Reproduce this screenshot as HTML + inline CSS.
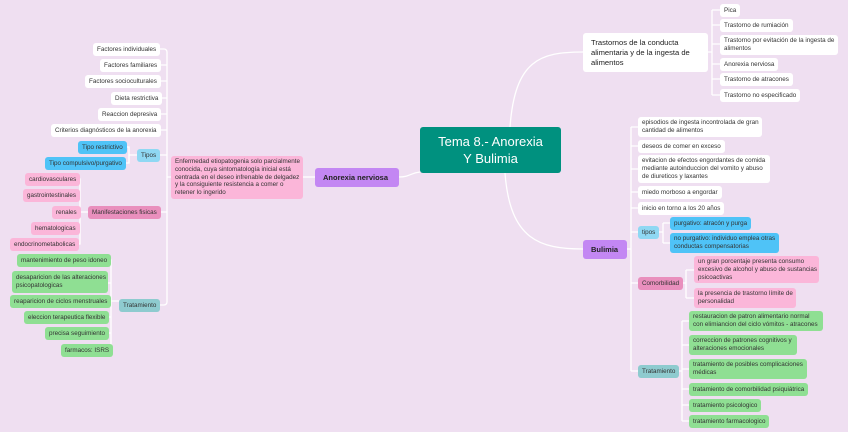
<!DOCTYPE html>
<html><head><meta charset="utf-8"><style>
*{margin:0;padding:0;box-sizing:border-box}
body{width:848px;height:434px;background:#efdff1;position:relative;overflow:hidden;font-family:"Liberation Sans",sans-serif;color:#333}
.n{position:absolute;background:#fff;border-radius:3px;font-size:6.3px;line-height:8px;padding:3px 4px;white-space:nowrap;display:flex;align-items:center;overflow:hidden}
.b{background:#4fc3f7}.lb{background:#8fd8f3}.p{background:#fbb6d9}.dp{background:#e98fbd}.g{background:#8fdf93}.t{background:#8ecbcf}
.pu{background:#c387f3;font-weight:bold;font-size:7.5px;color:#222}
svg{position:absolute;left:0;top:0}
</style></head><body>
<svg width="848" height="434" fill="none" stroke="#fff" stroke-width="1.3">
<path d="M399 177 C410 177 410 173 420 172"/>
<path d="M510 127 C515 60 540 52 583 52"/>
<path d="M505 173 C510 240 540 249 583 249"/>
<path d="M315 177 L303 177"/>
<path d="M160 49 h4 a3 3 0 0 1 3 3 V302 a3 3 0 0 1 -3 3 h-4 M160 65 h7 M160 81 h7 M160 98 h7 M160 114 h7 M160 130 h7 M160 155 h7 M160 212 h7 M167 177 h4"/>
<path d="M126 147 h3 V163 h-3 M129 155 h8"/>
<path d="M77 179 h3 V244 h-3 M77 195 h3 M77 212 h11 M77 228 h3"/>
<path d="M108 260 h3 V350 h-3 M108 283 h3 M108 301 h11 M108 317 h3 M108 333 h3"/>
<path d="M708 52 h4 M712 10 V95 M712 10 h8 M712 25 h8 M712 44 h8 M712 64 h8 M712 79 h8 M712 95 h8"/>
<path d="M627 249 h4 M631 127 V371 M631 127 h7 M631 146 h7 M631 169 h7 M631 192 h7 M631 208 h7 M631 232 h7 M631 283 h7 M631 371 h7"/>
<path d="M659 232 h4 M663 223 V243 M663 223 h7 M663 243 h7"/>
<path d="M682 283 h4 M686 270 V298 M686 270 h8 M686 298 h8"/>
<path d="M678 371 h4 M682 321 V421 M682 321 h7 M682 345 h7 M682 369 h7 M682 389 h7 M682 405 h7 M682 421 h7"/>
</svg>
<div style="position:absolute;left:0;top:432px;width:848px;height:2px;background:#fff"></div>

<div class="n" style="left:93px;top:43px;height:13px">Factores individuales</div>
<div class="n" style="left:100px;top:59px;height:13px">Factores familiares</div>
<div class="n" style="left:85px;top:75px;height:13px">Factores socioculturales</div>
<div class="n" style="left:111px;top:92px;height:13px">Dieta restrictiva</div>
<div class="n" style="left:98px;top:108px;height:13px">Reaccion depresiva</div>
<div class="n" style="left:51px;top:124px;height:13px">Criterios diagnósticos de la anorexia</div>
<div class="n b" style="left:78px;top:141px;height:13px">Tipo restrictivo</div>
<div class="n b" style="left:45px;top:157px;height:13px">Tipo compulsivo/purgativo</div>
<div class="n lb" style="left:137px;top:149px;height:13px">Tipos</div>
<div class="n p" style="left:25px;top:173px;height:13px">cardiovasculares</div>
<div class="n p" style="left:23px;top:189px;height:13px">gastrointestinales</div>
<div class="n p" style="left:52px;top:206px;height:13px">renales</div>
<div class="n p" style="left:31px;top:222px;height:13px">hematologicas</div>
<div class="n p" style="left:10px;top:238px;height:13px">endocrinometabolicas</div>
<div class="n dp" style="left:88px;top:206px;height:13px">Manifestaciones fisicas</div>
<div class="n g" style="left:17px;top:254px;height:13px">mantenimiento de peso idoneo</div>
<div class="n g" style="left:12px;top:271px;width:96px;height:22px">desaparicion de las alteraciones<br>psicopatologicas</div>
<div class="n g" style="left:10px;top:295px;height:13px">reaparicion de ciclos menstruales</div>
<div class="n g" style="left:24px;top:311px;height:13px">eleccion terapeutica flexible</div>
<div class="n g" style="left:45px;top:327px;height:13px">precisa seguimiento</div>
<div class="n g" style="left:61px;top:344px;height:13px">farmacos: ISRS</div>
<div class="n t" style="left:119px;top:299px;height:13px">Tratamiento</div>
<div class="n p" style="left:171px;top:156px;width:132px;height:43px;line-height:7.7px">Enfermedad etiopatogenia solo parcialmente<br>conocida, cuya sintomatología inicial está<br>centrada en el deseo infrenable de delgadez<br>y la consiguiente resistencia a comer o<br>retener lo ingerido</div>
<div class="n pu" style="left:315px;top:168px;width:84px;height:19px;padding-left:8px">Anorexia nerviosa</div>
<div class="n" style="left:420px;top:127px;width:141px;height:46px;background:#00917f;color:#fff;font-size:13px;line-height:17px;justify-content:center;text-align:center">Tema 8.- Anorexia<br>Y Bulimia</div>
<div class="n" style="left:583px;top:33px;width:125px;height:39px;font-size:7.6px;line-height:10px;padding:3px 8px;color:#222">Trastornos de la conducta<br>alimentaria y de la ingesta de<br>alimentos</div>
<div class="n" style="left:720px;top:4px;height:13px">Pica</div>
<div class="n" style="left:720px;top:19px;height:13px">Trastorno de rumiación</div>
<div class="n" style="left:720px;top:35px;width:118px;height:20px">Trastorno por evitación de la ingesta de<br>alimentos</div>
<div class="n" style="left:720px;top:58px;height:13px">Anorexia nerviosa</div>
<div class="n" style="left:720px;top:73px;height:13px">Trastorno de atracones</div>
<div class="n" style="left:720px;top:89px;height:13px">Trastorno no especificado</div>
<div class="n pu" style="left:583px;top:240px;width:44px;height:19px;padding-left:8px">Bulimia</div>
<div class="n" style="left:638px;top:117px;width:124px;height:20px">episodios de ingesta incontrolada de gran<br>cantidad de alimentos</div>
<div class="n" style="left:638px;top:140px;height:13px">deseos de comer en exceso</div>
<div class="n" style="left:638px;top:155px;width:132px;height:28px">evitacion de efectos engordantes de comida<br>mediante autoinduccion del vomito y abuso<br>de diureticos y laxantes</div>
<div class="n" style="left:638px;top:186px;height:13px">miedo morboso a engordar</div>
<div class="n" style="left:638px;top:202px;height:13px">inicio en torno a los 20 años</div>
<div class="n lb" style="left:638px;top:226px;height:13px">tipos</div>
<div class="n b" style="left:670px;top:217px;height:13px">purgativo: atracón y purga</div>
<div class="n b" style="left:670px;top:233px;width:109px;height:20px">no purgativo: individuo emplea otras<br>conductas compensatorias</div>
<div class="n dp" style="left:638px;top:277px;height:13px">Comorbilidad</div>
<div class="n p" style="left:694px;top:256px;width:125px;height:27px">un gran porcentaje presenta consumo<br>excesivo de alcohol y abuso de sustancias<br>psicoactivas</div>
<div class="n p" style="left:694px;top:288px;width:102px;height:20px">la presencia de trastorno límite de<br>personalidad</div>
<div class="n t" style="left:638px;top:365px;height:13px">Tratamiento</div>
<div class="n g" style="left:689px;top:311px;width:134px;height:20px">restauracion de patron alimentario normal<br>con elimiancion del ciclo vómitos - atracones</div>
<div class="n g" style="left:689px;top:335px;width:108px;height:20px">correccion de patrones cognitivos y<br>alteraciones emocionales</div>
<div class="n g" style="left:689px;top:359px;width:118px;height:20px">tratamiento de posibles complicaciones<br>médicas</div>
<div class="n g" style="left:689px;top:383px;height:13px">tratamiento de comorbilidad psiquiátrica</div>
<div class="n g" style="left:689px;top:399px;height:13px">tratamiento psicologico</div>
<div class="n g" style="left:689px;top:415px;height:13px">tratamiento farmacologico</div>
</body></html>
